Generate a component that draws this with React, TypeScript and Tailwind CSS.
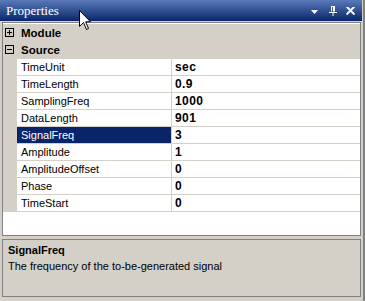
import React from "react";

const props = [
  { name: "TimeUnit", value: "sec" },
  { name: "TimeLength", value: "0.9" },
  { name: "SamplingFreq", value: "1000" },
  { name: "DataLength", value: "901" },
  { name: "SignalFreq", value: "3", selected: true },
  { name: "Amplitude", value: "1" },
  { name: "AmplitudeOffset", value: "0" },
  { name: "Phase", value: "0" },
  { name: "TimeStart", value: "0" },
];

function ExpandBox({ open }: { open: boolean }) {
  return (
    <svg width="9" height="9" viewBox="0 0 9 9" className="shrink-0">
      <rect x="0.5" y="0.5" width="8" height="8" fill="none" stroke="#000" />
      <line x1="2" y1="4.5" x2="7" y2="4.5" stroke="#000" />
      {!open && <line x1="4.5" y1="2" x2="4.5" y2="7" stroke="#000" />}
    </svg>
  );
}

function Category({ label, open }: { label: string; open: boolean }) {
  return (
    <div className="flex h-[17px] items-center bg-[#d4d0c8] pl-[2px]">
      <ExpandBox open={open} />
      <span className="ml-[7px] text-[11.5px] font-bold leading-[16px] text-black">{label}</span>
    </div>
  );
}

export default function App() {
  return (
    <div className="relative flex h-[301px] w-[365px] overflow-hidden bg-[#d4d0c8] font-['Liberation_Sans',Arial,sans-serif]">
      <div className="flex w-[362px] flex-col">
        {/* title bar */}
        <div className="flex h-[21px] items-center bg-gradient-to-b from-[#5a7bb9] to-[#0b266b] pl-[6px] pr-[7px]">
          <span className="font-['Liberation_Serif',serif] text-[13px] leading-[16px] text-white">Properties</span>
          <div className="ml-auto flex items-center">
            <svg width="8" height="5" viewBox="0 0 8 5" className="mt-[3px]">
              <path d="M0 0 H7 L3.5 4 Z" fill="#fff" />
            </svg>
            <svg width="9" height="10" viewBox="0 0 9 10" className="ml-[10px]">
              <path d="M2.5 0.5 V5.5 M4.5 0.5 V5.5 M5.5 0.5 V5.5 M2 0.5 H6 M0 6.5 H8 M4 6.5 V10" stroke="#fff" fill="none" />
            </svg>
            <svg width="9" height="8" viewBox="0 0 9 8" className="ml-[8px]">
              <path d="M0.5 0 L8.5 8 M1.5 0 L8.5 7 M8.5 0 L0.5 8 M7.5 0 L0.5 7" stroke="#fff" strokeWidth="1.2" />
            </svg>
          </div>
        </div>

        {/* property grid */}
        <div className="ml-[2px] mr-[1px] mt-[1px] flex h-[214px] flex-col border border-[#808080] bg-white pt-[1px]">
          <Category label="Module" open={false} />
          <Category label="Source" open={true} />
          {props.map((p) => (
            <div key={p.name} className="flex h-[17px] border-t border-[#d4d0c8]">
              <div className="w-[14px] bg-[#d4d0c8]" />
              <div
                className={`flex w-[154px] items-center pl-[4px] text-[11px] leading-[16px] ${
                  p.selected ? "bg-[#0a246a] text-white" : "text-black"
                }`}
              >
                {p.name}
              </div>
              <div className="flex flex-1 items-center border-l border-[#d4d0c8] pl-[3px] text-[12px] font-bold leading-[16px] tracking-[0.4px] text-black">
                {p.value}
              </div>
            </div>
          ))}
          <div className="border-t border-[#d4d0c8]" />
        </div>

        {/* description */}
        <div className="ml-[2px] mr-[1px] mt-[3px] h-[58px] border border-[#808080] px-[5px] pt-[2px]">
          <div className="text-[11px] font-bold leading-[16px] text-black">SignalFreq</div>
          <div className="text-[11px] leading-[16px] text-black">The frequency of the to-be-generated signal</div>
        </div>
      </div>
      <div className="w-[1px]" />
      <div className="w-[2px] bg-[#808080]" />

      {/* mouse cursor */}
      <svg width="13" height="21" viewBox="0 0 13 21" className="absolute left-[79px] top-[10px]">
        <path d="M0.5 0.5 V16.5 L4.5 12.5 L7.5 19.5 L9.5 18.5 L6.7 11.8 H11.5 Z" fill="#fff" stroke="#000" />
      </svg>
    </div>
  );
}
